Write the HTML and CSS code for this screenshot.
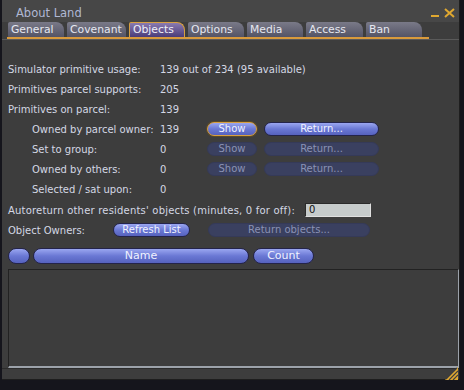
FILE: index.html
```html
<!DOCTYPE html>
<html lang="en">
<head>
  <meta charset="UTF-8">
  <title>About Land</title>
  <link rel="stylesheet" href="styles.css">
</head>
<body>
  <div class="floater">
    <div class="title-bar">
      <div class="title">About Land</div>
      <div class="title-buttons">
        <span class="btn-min"></span>
        <svg class="btn-close" width="11" height="10" viewBox="0 0 11 10">
          <path d="M1 1 L10 9 M10 1 L1 9" stroke="#e0a830" stroke-width="2"/>
        </svg>
      </div>
    </div>

    <div class="tabs">
      <div class="tab">General</div>
      <div class="tab">Covenant</div>
      <div class="tab active">Objects</div>
      <div class="tab">Options</div>
      <div class="tab">Media</div>
      <div class="tab">Access</div>
      <div class="tab">Ban</div>
    </div>

    <div class="panel">
      <div class="row">
        <div class="label">Simulator primitive usage:</div>
        <div class="value">139 out of 234 (95 available)</div>
      </div>
      <div class="row">
        <div class="label">Primitives parcel supports:</div>
        <div class="value">205</div>
      </div>
      <div class="row">
        <div class="label">Primitives on parcel:</div>
        <div class="value">139</div>
      </div>
      <div class="row sub">
        <div class="label">Owned by parcel owner:</div>
        <div class="value short">139</div>
        <button class="btn show focused">Show</button>
        <button class="btn ret">Return...</button>
      </div>
      <div class="row sub">
        <div class="label">Set to group:</div>
        <div class="value short">0</div>
        <button class="btn show" disabled>Show</button>
        <button class="btn ret" disabled>Return...</button>
      </div>
      <div class="row sub">
        <div class="label">Owned by others:</div>
        <div class="value short">0</div>
        <button class="btn show" disabled>Show</button>
        <button class="btn ret" disabled>Return...</button>
      </div>
      <div class="row sub">
        <div class="label">Selected / sat upon:</div>
        <div class="value short">0</div>
      </div>

      <div class="row autoreturn">
        <div class="label">Autoreturn other residents' objects (minutes, 0 for off):</div>
        <div class="input">0</div>
      </div>
      <div class="row owners">
        <div class="label">Object Owners:</div>
        <button class="btn refresh">Refresh List</button>
        <button class="btn return-all" disabled>Return objects...</button>
      </div>

      <div class="list-header">
        <button class="btn col-icon"></button>
        <button class="btn col-name">Name</button>
        <button class="btn col-count">Count</button>
      </div>
      <div class="list"></div>
    </div>

    <div class="bottom">
      <svg class="grip" width="13" height="13" viewBox="0 0 13 13">
        <path d="M13 0 L13 13 L0 13 Z" fill="#e0a830"/>
        <path d="M4 13 L13 4 M8 13 L13 8 M1 12 L12 1" stroke="#3d3d3d" stroke-width="1.2"/>
      </svg>
    </div>
  </div>
</body>
</html>
```

FILE: styles.css
```css
/* GENERAL */
body {
  margin: 0;
  background-color: #15151c;
  font-family: 'DejaVu Sans', sans-serif;
  font-size: 10px;
  color: #d4d8e4;
  width: 464px;
  height: 390px;
  overflow: hidden;
}

.floater {
  margin-left: 2px;
  width: 458px;
  height: 380px;
  background-color: #3d3d3d;
  border-right: 1px solid #1e1e1e;
  border-bottom: 1px solid #1e1e1e;
  box-sizing: border-box;
  display: flex;
  flex-direction: column;
}

.floater > div {
  flex-shrink: 0;
}

.title-bar {
  height: 22px;
  background-color: #474747;
  display: flex;
  justify-content: space-between;
  align-items: center;
  padding: 0 4px 0 14px;
}

.title {
  font-size: 11.5px;
  color: #b0b8d4;
  padding-top: 3px;
}

.title-buttons {
  display: flex;
  align-items: center;
  gap: 5px;
  padding-top: 3px;
}

.btn-min {
  width: 8px;
  height: 2px;
  background-color: #e0a830;
  margin-top: 7px;
}

/* TABS */
.tabs {
  display: flex;
  gap: 3px;
  padding: 0 0 0 6px;
  height: 15px;
  border-bottom: 2px solid #3d3d3d;
  box-shadow: 0 1px 0 #5a5a5a;
  position: relative;
}

.tabs::after {
  content: '';
  position: absolute;
  left: 5px;
  width: 422px;
  bottom: -2px;
  height: 2px;
  background-color: #d99a3c;
}

.tab {
  width: 56px;
  height: 15px;
  box-sizing: border-box;
  padding: 1px 0 0 3px;
  background: linear-gradient(#7a7a88, #545466);
  border-radius: 2px 8px 0 0;
  color: #e6e8f0;
  font-size: 10.8px;
  line-height: 13px;
}

.tab:nth-child(2) { width: 59px; }
.tab:nth-child(6) { width: 57px; }

.tab.active {
  background: linear-gradient(#8a7ab0, #4a3c7a);
  border: 1px solid #d8a040;
  border-bottom: none;
  padding-top: 0;
  color: #f0f0f8;
}

/* PANEL */
.panel {
  flex: 1;
  padding: 20px 0 0 6px;
  display: flex;
  flex-direction: column;
}

.row {
  display: flex;
  align-items: center;
  height: 20px;
  flex-shrink: 0;
}

.label {
  width: 152px;
}

.row.sub .label {
  width: 128px;
  padding-left: 24px;
}

.value.short {
  width: 47px;
}

.btn {
  font-family: 'DejaVu Sans', sans-serif;
  font-size: 10px;
  height: 14px;
  padding: 0;
  border: 1px solid #24244a;
  border-radius: 7px;
  background: linear-gradient(#9aa6f0, #6a78d4 50%, #5662be);
  color: #f0f2ff;
  line-height: 12px;
  box-sizing: border-box;
}

.btn:disabled {
  background: #3a4060;
  border-color: #353a58;
  color: #8a92b4;
}

.btn.focused {
  border: 1px solid #d8a040;
  box-shadow: 0 0 0 1px #5a4a2a;
}

.show {
  width: 50px;
}

.ret {
  width: 115px;
  margin-left: 7px;
}

.autoreturn {
  margin-top: 1px;
}

.autoreturn .label {
  width: 297px;
  letter-spacing: 0.2px;
}

.input {
  width: 66px;
  height: 14px;
  box-sizing: border-box;
  background-color: #c6cbcb;
  border: 1px solid #2a2a2a;
  border-right-color: #e0e0e0;
  border-bottom-color: #e0e0e0;
  color: #111;
  padding-left: 3px;
  line-height: 12px;
}

.owners .label {
  width: 105px;
}

.refresh {
  width: 77px;
}

.return-all {
  width: 162px;
  margin-left: 18px;
}

/* LIST */
.list-header {
  display: flex;
  margin-top: 8px;
  height: 16px;
  flex-shrink: 0;
}

.list-header .btn {
  height: 16px;
  border-radius: 8px;
  font-size: 11px;
  line-height: 14px;
}

.col-icon { width: 22px; }
.col-name { width: 216px; margin-left: 3px; }
.col-count { width: 61px; margin-left: 4px; }

.list {
  margin-top: 5px;
  width: 451px;
  height: 99px;
  flex-shrink: 0;
  box-sizing: border-box;
  border: 1px solid #222;
  border-right-color: #9ca2aa;
  border-bottom: 2px solid #9ca2aa;
}

.bottom {
  height: 11px;
  display: flex;
  justify-content: flex-end;
  align-items: flex-end;
  border-top: 1px solid #2c2c2c;
  padding-right: 1px;
}
```
